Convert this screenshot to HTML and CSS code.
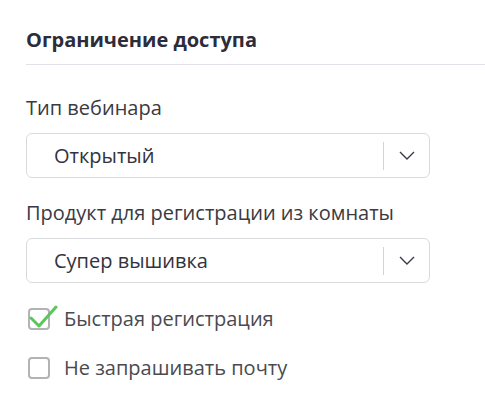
FILE: index.html
```html
<!DOCTYPE html>
<html>

<head>
    <title>Ограничение доступа</title>

    <link rel="stylesheet" href="styles.css">
</head>

<body>
    <div class="panel">
        <div class="panelHead">Ограничение доступа</div>

        <div class="field">
            <div class="fieldLabel">Тип вебинара</div>
            <div class="select">
                <span class="selectValue">Открытый</span>
                <span class="selectSep"></span>
                <span class="selectArrow">
                    <svg width="16" height="9" viewBox="0 0 16 9">
                        <path d="M1 1 L8 8 L15 1" fill="none" stroke="#3b3b48" stroke-width="1.4" />
                    </svg>
                </span>
            </div>
        </div>

        <div class="field">
            <div class="fieldLabel">Продукт для регистрации из комнаты</div>
            <div class="select">
                <span class="selectValue">Супер вышивка</span>
                <span class="selectSep"></span>
                <span class="selectArrow">
                    <svg width="16" height="9" viewBox="0 0 16 9">
                        <path d="M1 1 L8 8 L15 1" fill="none" stroke="#3b3b48" stroke-width="1.4" />
                    </svg>
                </span>
            </div>
        </div>

        <label class="check">
            <span class="checkBox">
                <svg class="checkMark" width="30" height="24" viewBox="0 0 30 24">
                    <path d="M3 13 L11 21 L28 2" fill="none" stroke="#5bc75b" stroke-width="3" stroke-linecap="round" stroke-linejoin="round" />
                </svg>
            </span>
            Быстрая регистрация
        </label>

        <label class="check">
            <span class="checkBox"></span>
            Не запрашивать почту
        </label>
    </div>
</body>

</html>
```

FILE: styles.css
```css
body {
    font-family: "Open Sans", sans-serif;
    background: #ffffff;
    color: #3a3a42;
    margin: 0;
}

.panel {
    padding: 26px 0 0 26px;
}

.panelHead {
    font-size: 20px;
    font-weight: 700;
    line-height: 27px;
    color: #2c2c3a;
    padding-bottom: 11px;
    border-bottom: 1px solid #e1e1ec;
    margin-bottom: 29px;
}

.field {
    margin-bottom: 21px;
}

.fieldLabel {
    font-size: 20px;
    line-height: 27px;
    margin-bottom: 12px;
}

.select {
    width: 404px;
    height: 45px;
    box-sizing: border-box;
    border: 1px solid #d9d9de;
    border-radius: 6px;
    display: flex;
    align-items: center;
}

.selectValue {
    flex: 1;
    font-size: 20px;
    line-height: 27px;
    padding-left: 27px;
    color: #33333d;
}

.selectSep {
    width: 1px;
    height: 28px;
    background: #d4d4d8;
}

.selectArrow {
    width: 45px;
    display: flex;
    justify-content: center;
    align-items: center;
}

.check {
    display: flex;
    align-items: center;
    font-size: 20px;
    line-height: 27px;
    color: #4a4a50;
    padding-left: 2px;
    margin-top: 22px;
}

.checkBox {
    position: relative;
    width: 22px;
    height: 22px;
    box-sizing: border-box;
    border: 2px solid #b3b3b7;
    border-radius: 4px;
    margin-right: 14px;
}

.checkMark {
    position: absolute;
    left: -2px;
    top: -5px;
}
```
